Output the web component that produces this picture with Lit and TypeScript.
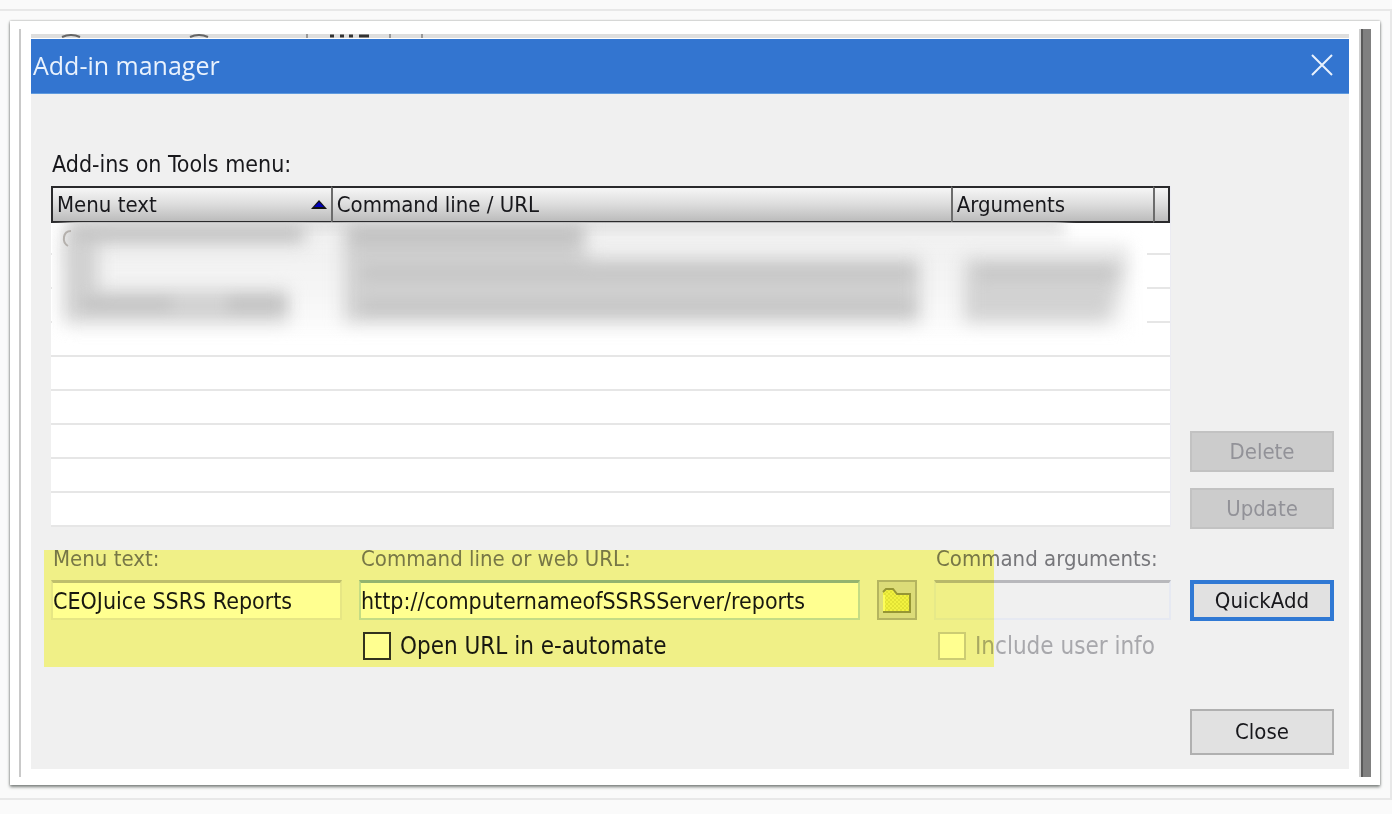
import { LitElement, html, svg, css } from "lit";
import { customElement, state } from "lit/decorators.js";

const folderIcon = svg`
  <defs>
    <pattern id="dither" width="4" height="4" patternUnits="userSpaceOnUse">
      <rect width="4" height="4" fill="#f2f270" />
      <path d="M0 0h2v2H0zM2 2h2v2H2z" fill="#e2e25e" />
    </pattern>
  </defs>
  <path d="M1 25V5l2-3h9l4 5h12v18z" fill="url(#dither)"/>
  <path d="M2 24V8" fill="none" stroke="#fdfda0" stroke-width="2"/>
  <path d="M1 5l3-3h7l4 5h13v18H1" fill="none" stroke="#96965c" stroke-width="2"/>`;

@customElement("app-root")
export class AppRoot extends LitElement {
  @state() private menuText = "CEOJuice SSRS Reports";
  @state() private commandUrl = "http://computernameofSSRSServer/reports";

  static styles = css`
    :host {
      display: block;
      box-sizing: border-box;
      min-height: 100vh;
      padding: 9px 0 13px;
      background: #fafafa;
      color: #18181c;
      font-family: "DejaVu Sans Condensed", "DejaVu Sans", sans-serif;
      font-size: 22px;
      line-height: 28px;
    }
    * {
      box-sizing: border-box;
    }
    .frame {
      border: 2px solid #e8e8e8;
      border-left: 0;
      padding: 10px 10px 13px;
    }
    .sheet {
      display: flex;
      gap: 10px;
      padding: 8px 9px;
      background: #fff;
      box-shadow: 0 2px 3px #7c807e, 0 0 2px #a0a0a0;
    }
    .rail-left {
      width: 2px;
      background: #c9c9c9;
    }
    .rail-right {
      width: 12px;
      border-left: 2px solid #cfcfcf;
      background: linear-gradient(90deg, #5a5a5a 2px, #808080 2px);
    }
    .dialog {
      flex: 1;
      min-width: 0;
      margin: 5px 0 8px;
    }
    .behind {
      display: flex;
      height: 5px;
      overflow: hidden;
      border-bottom: 1px solid #fff;
      background: #dedede;
    }
    .behind svg {
      display: block;
      width: 400px;
      height: 4px;
    }
    .title {
      display: flex;
      align-items: center;
      justify-content: space-between;
      height: 55px;
      padding: 0 16px 2px 2px;
      border-bottom: 1px solid #5f9ade;
      background: #3375d0;
      color: #e9f2fd;
    }
    h1 {
      margin: 0;
      font: 400 25px/34px "Open Sans", "Noto Sans", sans-serif;
    }
    button {
      font: inherit;
      color: inherit;
      padding: 0;
      height: 41px;
      border: 2px solid #b0b0b0;
      background: #e1e1e1;
    }
    button:disabled {
      border-color: #c2c2c2;
      background: #ccc;
      color: #929298;
    }
    .dismiss {
      width: 22px;
      height: 22px;
      border: 0;
      background: none;
    }
    .dismiss svg,
    .browse svg {
      display: block;
      margin: auto;
    }
    .body {
      display: grid;
      grid-template-columns: minmax(0, 1fr) 144px;
      column-gap: 19px;
      padding: 56px 15px 14px 20px;
      background: #f0f0f0;
    }
    .caption {
      grid-column: 1 / -1;
      height: 36px;
      padding-left: 1px;
      font-size: 23px;
    }
    .list {
      position: relative;
      padding-bottom: 2px;
    }
    table {
      width: 100%;
      table-layout: fixed;
      border-collapse: separate;
      border-spacing: 0;
      background: #fff;
      border-right: 1px solid #ebebf2;
    }
    th {
      height: 37px;
      padding: 0 4px;
      border: solid #2a2a2c;
      border-width: 2px 0;
      background: linear-gradient(#f6f6f6, #dcdcdc 50%, #bcbcbc);
      font-weight: 400;
      text-align: left;
      line-height: 32px;
    }
    th + th {
      border-left: 2px solid #6c6c6c;
    }
    th:first-child {
      border-left: 2px solid #2a2a2c;
    }
    th:last-child {
      border-right: 2px solid #2a2a2c;
    }
    .c1 {
      width: 25%;
    }
    .c2 {
      width: 55.4%;
    }
    .c3 {
      width: 18.1%;
    }
    .sorted {
      display: flex;
      align-items: center;
      justify-content: space-between;
    }
    td {
      height: 34px;
      padding: 0;
      border-bottom: 2px solid #e6e6e6;
    }
    tr:first-child td {
      height: 32px;
    }
    .smudge {
      position: absolute;
      left: 1px;
      top: 36px;
      width: calc(100% - 25px);
      height: 126px;
      pointer-events: none;
    }
    .side {
      display: flex;
      flex-direction: column;
      justify-content: flex-end;
      gap: 16px;
    }
    .form {
      position: relative;
      display: grid;
      grid-template-columns: 291fr 501fr 40px 237fr;
      column-gap: 17px;
      padding-top: 16px;
    }
    .form label.name {
      height: 35px;
      padding-left: 2px;
      color: #77777b;
      white-space: nowrap;
    }
    .browse-name {
      height: 35px;
    }
    .text {
      width: 100%;
      min-width: 0;
      height: 40px;
      padding: 0;
      border: 2px solid #e6e6ea;
      border-top: 3px solid #bfbfbf;
      border-radius: 0;
      background: #fff;
      font: inherit;
      font-size: 23px;
      color: inherit;
      outline: 0;
    }
    .text.active {
      border-color: #c4dcea;
      border-top-color: #94b4c4;
    }
    .text:disabled {
      border-color: #e6e9f2;
      border-top-color: #b8b8bc;
      background: #f0f0f0;
    }
    .browse {
      height: 40px;
      border-color: #b4b4a8;
      background: #dcdcd4;
    }
    .check {
      display: flex;
      align-items: center;
      gap: 9px;
      height: 28px;
      margin-top: 12px;
      padding-left: 4px;
      white-space: nowrap;
      font-size: 24px;
    }
    .check.second {
      grid-column: 2 / 4;
    }
    .check.last {
      grid-column: 4;
      color: #a8a8ac;
    }
    .check input {
      appearance: none;
      flex: none;
      width: 28px;
      height: 28px;
      margin: 0;
      border: 2px solid #333;
      background: #fff;
    }
    .check input:disabled {
      border-color: #ccc;
    }
    .highlight {
      position: absolute;
      left: -7px;
      right: 177px;
      top: 21px;
      bottom: -7px;
      background: #ffff90;
      mix-blend-mode: multiply;
      pointer-events: none;
    }
    .add {
      padding-top: 51px;
      display: grid;
      align-content: start;
    }
    .add button {
      border: 4px solid #3079d4;
    }
    .close {
      grid-column: 2;
      height: 46px;
      margin-top: 49px;
    }
  `;

  render() {
    return html`
      <div class="frame">
        <div class="sheet">
          <div class="rail-left"></div>
          <main class="dialog">
            <div class="behind" aria-hidden="true">
              <svg viewBox="0 0 400 4">
                <g fill="none" stroke="#666" stroke-width="2">
                  <path d="M31 3q9-4 18 0M159 3q9-4 18 0" />
                </g>
                <path d="M276 0v4M359 0v4M391 0v4" stroke="#999" stroke-width="2" />
                <path d="M299 2h4M309 2h4M318 2h4M328 2h10" stroke="#333" stroke-width="3" />
              </svg>
            </div>
            <header class="title">
              <h1>Add-in manager</h1>
              <button class="dismiss" aria-label="Close window">
                <svg width="22" height="22" viewBox="0 0 22 22">
                  <path d="M1 1l20 20M21 1L1 21" stroke="#e9f2fd" stroke-width="2" fill="none" />
                </svg>
              </button>
            </header>
            <div class="body">
              <div class="caption" id="caption">Add-ins on Tools menu:</div>
              <div class="list">
                <table aria-labelledby="caption">
                  <thead>
                    <tr>
                      <th class="c1">
                        <span class="sorted"
                          >Menu text
                          <svg width="16" height="9" viewBox="0 0 16 9">
                            <path d="M8 0l8 9H0z" fill="#111" />
                            <path d="M8 2l5 5H3z" fill="#0000b8" />
                          </svg>
                        </span>
                      </th>
                      <th class="c2">Command line / URL</th>
                      <th class="c3">Arguments</th>
                      <th></th>
                    </tr>
                  </thead>
                  <tbody>
                    ${Array.from({ length: 9 }, () => html`<tr><td colspan="4"></td></tr>`)}
                  </tbody>
                </table>
                <svg class="smudge" viewBox="0 0 1095 126" preserveAspectRatio="none" aria-hidden="true">
                  <defs>
                    <filter id="soft" x="-10%" y="-50%" width="120%" height="200%" color-interpolation-filters="sRGB">
                      <feGaussianBlur stdDeviation="9" />
                    </filter>
                    <filter id="fine" x="-10%" y="-50%" width="120%" height="200%" color-interpolation-filters="sRGB">
                      <feGaussianBlur stdDeviation="7" />
                    </filter>
                    <linearGradient id="veil" x2="0" y2="1">
                      <stop offset="0" stop-color="#f0f0f0" />
                      <stop offset=".6" stop-color="#f6f6f6" />
                      <stop offset="1" stop-color="#fcfcfc" />
                    </linearGradient>
                  </defs>
                  <rect y="2" width="1095" height="124" fill="#fff" />
                  <rect x="14" y="2" width="1000" height="36" fill="#f2f2f2" filter="url(#fine)" />
                  <rect x="14" y="20" width="1064" height="90" fill="url(#veil)" filter="url(#fine)" />
                  <rect x="20" y="-4" width="990" height="12" fill="#dcdcdc" filter="url(#fine)" />
                  <g filter="url(#soft)">
                    <path d="M14 0h240v22H14zM12 14h34v56H12z" fill="#d0d0d0" />
                    <path d="M12 68h224v32H12z" fill="#d0d0d0" />
                    <path d="M292 0h240v36h-240z" fill="#cbcbcb" />
                    <path d="M292 30h244v70h-244zM520 36h348v64H520z" fill="#d0d0d0" />
                    <path d="M912 36h162l-16 64H912z" fill="#d2d2d2" />
                  </g>
                  <g filter="url(#fine)" opacity=".35">
                    <path d="M310 44h552v14H310zM310 78h552v14H310zM926 44h136v14H926z" fill="#b4b4b4" />
                    <path d="M22 6h226v12H22zM300 6h232v12H300zM30 76h90v12H30zM176 74h58v16H176z" fill="#aaa" />
                  </g>
                  <path d="M19 9q-6 0-7 6t4 9" fill="none" stroke="#b4b0ac" stroke-width="2" />
                </svg>
              </div>
              <div class="side">
                <button disabled>Delete</button>
                <button disabled>Update</button>
              </div>
              <form class="form" @submit=${(e: Event) => e.preventDefault()}>
                <label class="name" for="menu">Menu text:</label>
                <label class="name" for="url">Command line or web URL:</label>
                <span class="browse-name"></span>
                <label class="name" for="args">Command arguments:</label>
                <input
                  class="text"
                  id="menu"
                  .value=${this.menuText}
                  @input=${(e: InputEvent) => (this.menuText = (e.target as HTMLInputElement).value)}
                />
                <input
                  class="text active"
                  id="url"
                  .value=${this.commandUrl}
                  @input=${(e: InputEvent) => (this.commandUrl = (e.target as HTMLInputElement).value)}
                />
                <button class="browse" type="button" aria-label="Browse">
                  <svg width="30" height="26" viewBox="0 0 30 26">${folderIcon}</svg>
                </button>
                <input class="text" id="args" disabled />
                <label class="check second"><input type="checkbox" />Open URL in e-automate</label>
                <label class="check last"><input type="checkbox" disabled />Include user info</label>
                <div class="highlight"></div>
              </form>
              <div class="add"><button>QuickAdd</button></div>
              <button class="close">Close</button>
            </div>
          </main>
          <div class="rail-right"></div>
        </div>
      </div>
    `;
  }
}
